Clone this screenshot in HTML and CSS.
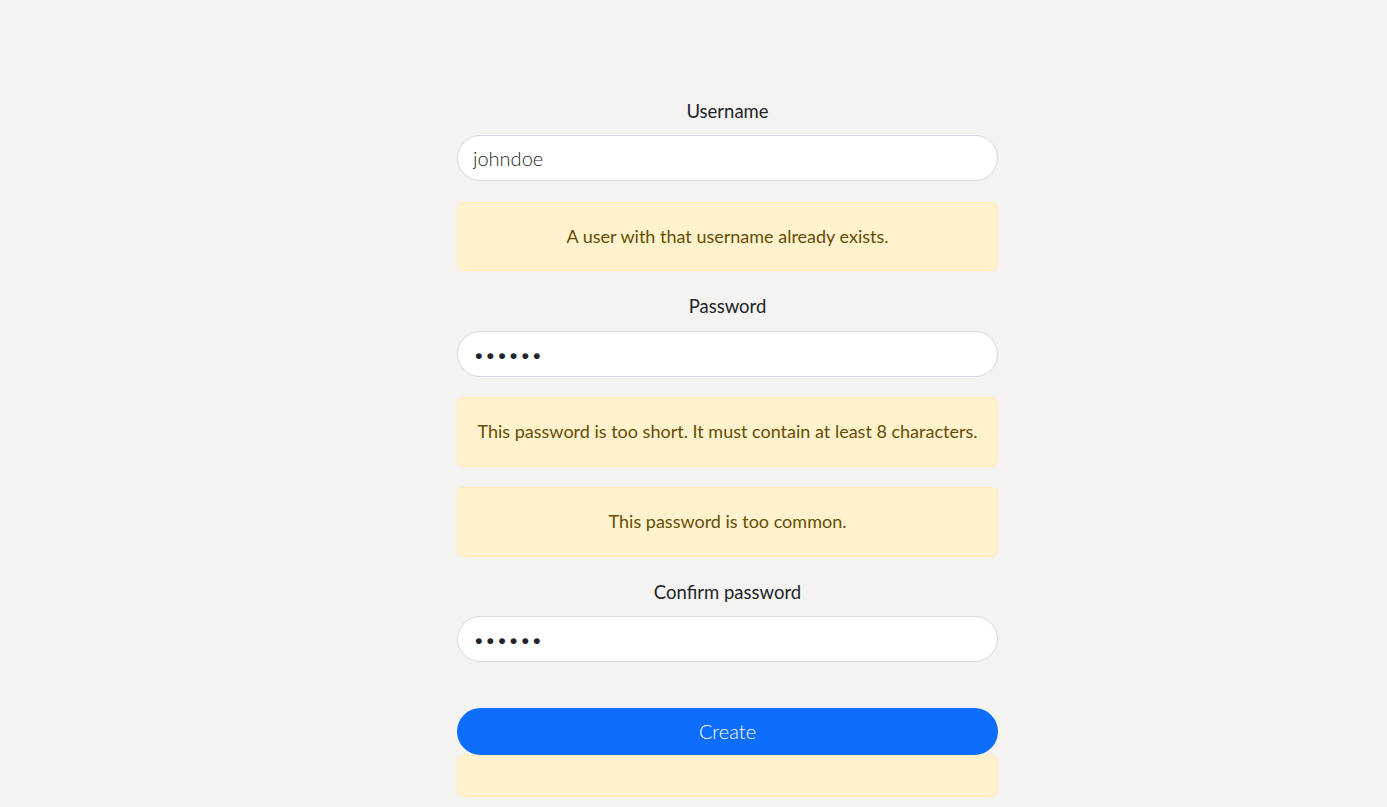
FILE: index.html
```html
<!DOCTYPE html>
<html lang="en">
<head>
<meta charset="utf-8">
<title>Create account</title>
<link rel="stylesheet" href="styles.css">
</head>
<body>
<main class="page">
  <form class="signup">
    <div class="field">
      <label class="label" for="username">Username</label>
      <input class="input" id="username" type="text" value="johndoe">
      <div class="alert">A user with that username already exists.</div>
    </div>
    <div class="field">
      <label class="label" for="password">Password</label>
      <input class="input" id="password" type="password" value="secret">
      <div class="alert">This password is too short. It must contain at least 8 characters.</div>
      <div class="alert">This password is too common.</div>
    </div>
    <div class="field">
      <label class="label" for="confirm">Confirm password</label>
      <input class="input" id="confirm" type="password" value="secret">
    </div>
    <button class="btn" type="button">Create</button>
    <div class="alert alert-empty"></div>
  </form>
</main>
</body>
</html>
```
FILE: styles.css
```css
html, body {
  margin: 0;
  padding: 0;
}
body {
  background: #f4f3f2;
  font-family: Lato, "Noto Sans", sans-serif;
  color: #212529;
}
.page {
  padding: 97.5px 0 0 68px;
  display: flex;
  justify-content: center;
}
.signup {
  width: 541px;
  display: flex;
  flex-direction: column;
}
.field {
  display: flex;
  flex-direction: column;
  margin-bottom: 22px;
}
.label {
  text-align: center;
  font-size: 18.5px;
  line-height: 27.5px;
  margin-bottom: 10px;
}
.input {
  box-sizing: border-box;
  width: 100%;
  height: 46px;
  border: 1px solid #d5d8de;
  border-radius: 23px;
  background: #fff;
  padding: 0 15px;
  font-family: Lato, sans-serif;
  font-weight: 300;
  font-size: 20px;
  color: #212529;
  outline: none;
}
.alert {
  box-sizing: border-box;
  margin-top: 20.5px;
  padding: 20.25px 16px;
  min-height: 42px;
  background: #fff2cd;
  border: 1px solid #ffecb5;
  border-radius: 6px;
  color: #664d03;
  text-align: center;
  font-size: 18px;
  line-height: 27px;
}
.btn {
  margin-top: 23.5px;
  height: 47px;
  border: none;
  border-radius: 24px;
  background: #0d6efd;
  color: #fff;
  font-family: Lato, sans-serif;
  font-weight: 300;
  font-size: 20px;
  cursor: pointer;
}
.alert-empty {
  margin-top: 0;
  height: 42px;
  padding: 0;
}
```
